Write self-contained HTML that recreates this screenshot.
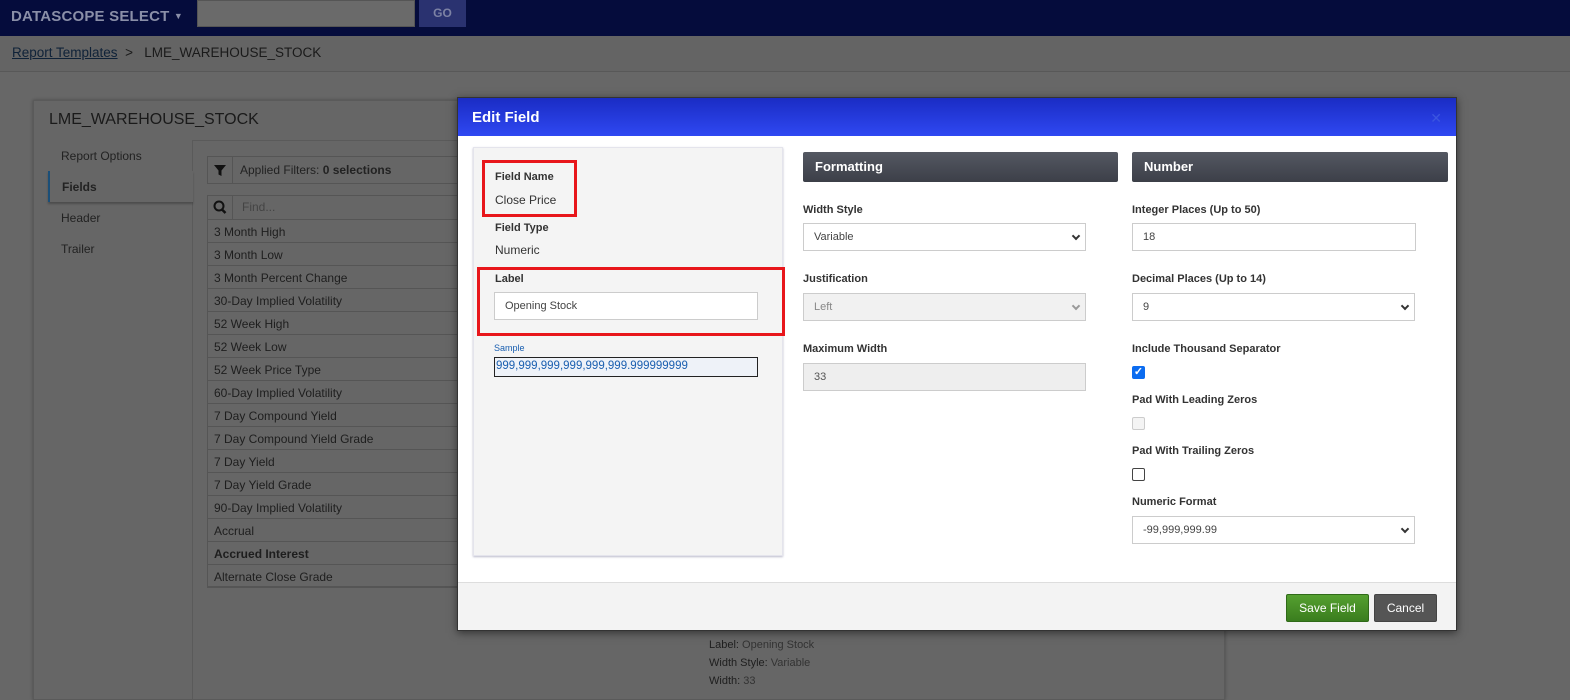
<!DOCTYPE html>
<html><head><meta charset="utf-8"><style>
*{box-sizing:border-box;margin:0;padding:0}
body{width:1570px;height:689px;overflow:hidden;background:#676767;font-family:"Liberation Sans",Arial,sans-serif;position:relative;color:#1e1e1e}
.a{position:absolute}
.top{left:0;top:0;width:1570px;height:36px;background:#050c3c}
.brand{left:11px;top:8px;color:#8a8fa8;font-size:15px;font-weight:bold;letter-spacing:0.2px}
.crumb{left:0;top:36px;width:1570px;height:36px;background:#646464;border-bottom:1px solid #585858}
.panel{left:33px;top:100px;width:1192px;height:600px;background:#666;border:1px solid #5a5a5a;box-shadow:0 0 3px rgba(0,0,0,.3)}
.row{left:207px;width:260px;height:23px;border:1px solid #555;border-top:none;font-size:12px;padding:5px 6px;color:#1e1e1e}
.modal{left:457px;top:97px;width:1000px;height:534px;background:#fff;border:1px solid #333;box-shadow:0 2px 8px rgba(0,0,0,.5)}
.hdr{left:0;top:0;width:998px;height:38px;background:linear-gradient(#1a2cc4,#2f48f2);color:#fff;font-weight:bold;font-size:15px;padding:11px 14px}
.lbl{font-size:11px;font-weight:bold;color:#333}
.inp{background:#fff;border:1px solid #ccc;font-size:11px;color:#444;padding:0 10px;line-height:26px;height:28px}
.sec{height:30px;background:linear-gradient(#545862,#3c3f48);border-radius:2px;color:#fff;font-weight:bold;font-size:13px;padding:7px 12px}
.chev{position:absolute;right:6px;top:9px;width:6px;height:6px;border-right:2px solid #333;border-bottom:2px solid #333;transform:rotate(45deg)}
</style></head><body>
<div class="a top"></div>
<div class="a brand">DATASCOPE SELECT <span style="font-size:9px;vertical-align:2px">▼</span></div>
<div class="a" style="left:197px;top:0;width:218px;height:27px;background:#6a6a6a;border:1px solid #555"></div>
<div class="a" style="left:419px;top:0;width:47px;height:27px;background:#2a3270;color:#7d82a4;font-weight:bold;font-size:12px;text-align:center;line-height:27px">GO</div>
<div class="a crumb"></div>
<div class="a" style="left:12px;top:45px;font-size:13.5px;color:#1a1a1a"><span style="text-decoration:underline;color:#0f2238">Report Templates</span> &nbsp;&gt;&nbsp;&nbsp; LME_WAREHOUSE_STOCK</div>
<div class="a panel"></div>
<div class="a" style="left:49px;top:111px;font-size:16px;color:#1a1a1a">LME_WAREHOUSE_STOCK</div>
<div class="a" style="left:192px;top:140px;width:1034px;height:560px;border-left:1px solid #5a5a5a;border-top:1px solid #5a5a5a"></div>
<div class="a" style="left:61px;top:149px;font-size:12px;color:#222">Report Options</div>
<div class="a" style="left:48px;top:171px;width:145px;height:31px;background:#666;border-left:2px solid #1b4f78;box-shadow:0 2px 2px rgba(0,0,0,.25)"></div>
<div class="a" style="left:62px;top:180px;font-size:12px;font-weight:bold;color:#222">Fields</div>
<div class="a" style="left:61px;top:211px;font-size:12px;color:#222">Header</div>
<div class="a" style="left:61px;top:242px;font-size:12px;color:#222">Trailer</div>
<div class="a" style="left:207px;top:156px;width:260px;height:28px;border:1px solid #555"></div>
<div class="a" style="left:207px;top:156px;width:26px;height:28px;border-right:1px solid #555"><svg width="26" height="28"><path d="M7 9 H19 L14.5 14.5 V20 L11.5 18.5 V14.5 Z" fill="#111"/></svg></div>
<div class="a" style="left:240px;top:163px;font-size:12px;color:#222">Applied Filters: <b>0 selections</b></div>
<div class="a" style="left:207px;top:195px;width:260px;height:25px;border:1px solid #555"></div>
<div class="a" style="left:207px;top:195px;width:26px;height:25px;border-right:1px solid #555"><svg width="26" height="25"><circle cx="12" cy="11" r="4.5" fill="none" stroke="#111" stroke-width="2"/><path d="M15 14.5 L18.5 18" stroke="#111" stroke-width="2.5"/></svg></div>
<div class="a" style="left:242px;top:200px;font-size:12px;color:#444">Find...</div>
<div class="a row" style="top:220px">3 Month High</div>
<div class="a row" style="top:243px">3 Month Low</div>
<div class="a row" style="top:266px">3 Month Percent Change</div>
<div class="a row" style="top:289px">30-Day Implied Volatility</div>
<div class="a row" style="top:312px">52 Week High</div>
<div class="a row" style="top:335px">52 Week Low</div>
<div class="a row" style="top:358px">52 Week Price Type</div>
<div class="a row" style="top:381px">60-Day Implied Volatility</div>
<div class="a row" style="top:404px">7 Day Compound Yield</div>
<div class="a row" style="top:427px">7 Day Compound Yield Grade</div>
<div class="a row" style="top:450px">7 Day Yield</div>
<div class="a row" style="top:473px">7 Day Yield Grade</div>
<div class="a row" style="top:496px">90-Day Implied Volatility</div>
<div class="a row" style="top:519px">Accrual</div>
<div class="a row" style="top:542px;font-weight:bold">Accrued Interest</div>
<div class="a row" style="top:565px;border-bottom:2px solid #555">Alternate Close Grade</div>
<div class="a" style="left:709px;top:636px;font-size:11px;color:#1e1e1e;line-height:18px">Label: <span style="color:#333">Opening Stock</span><br>Width Style: <span style="color:#333">Variable</span><br>Width: <span style="color:#333">33</span></div>

<div class="a modal">
 <div class="a hdr">Edit Field</div>
 <div class="a" style="right:14px;top:12px;color:#3b55e0;font-size:14px">✕</div>
 <div class="a" style="left:15px;top:49px;width:310px;height:409px;background:#f4f4f4;border:1px solid #e4e4ec;box-shadow:0 1px 2px #bbc"></div>
 <div class="a" style="left:24px;top:62px;width:95px;height:57px;border:3px solid #e8161b"></div>
 <div class="a lbl" style="left:37px;top:73px">Field Name</div>
 <div class="a" style="left:37px;top:95px;font-size:12px;color:#333">Close Price</div>
 <div class="a lbl" style="left:37px;top:124px">Field Type</div>
 <div class="a" style="left:37px;top:145px;font-size:12px;color:#333">Numeric</div>
 <div class="a" style="left:19px;top:169px;width:308px;height:69px;border:3px solid #e8161b"></div>
 <div class="a lbl" style="left:37px;top:175px">Label</div>
 <div class="a inp" style="left:36px;top:194px;width:264px">Opening Stock</div>
 <div class="a" style="left:36px;top:245px;font-size:9px;color:#1a5fb0">Sample</div>
 <div class="a" style="left:36px;top:259px;width:264px;height:20px;border:1px solid #222;background:#eef2f8;font-size:11.5px;color:#1a5fb0;padding:2px 0 0 1px">999,999,999,999,999,999.999999999</div>

 <div class="a sec" style="left:345px;top:54px;width:315px">Formatting</div>
 <div class="a lbl" style="left:345px;top:106px">Width Style</div>
 <div class="a inp" style="left:345px;top:125px;width:283px">Variable<span class="chev"></span></div>
 <div class="a lbl" style="left:345px;top:175px">Justification</div>
 <div class="a inp" style="left:345px;top:195px;width:283px;background:#f1f1f1;color:#888">Left<span class="chev" style="border-color:#999"></span></div>
 <div class="a lbl" style="left:345px;top:245px">Maximum Width</div>
 <div class="a inp" style="left:345px;top:265px;width:283px;background:#eee;color:#555">33</div>

 <div class="a sec" style="left:674px;top:54px;width:316px">Number</div>
 <div class="a lbl" style="left:674px;top:106px">Integer Places (Up to 50)</div>
 <div class="a inp" style="left:674px;top:125px;width:284px">18</div>
 <div class="a lbl" style="left:674px;top:175px">Decimal Places (Up to 14)</div>
 <div class="a inp" style="left:674px;top:195px;width:283px">9<span class="chev"></span></div>
 <div class="a lbl" style="left:674px;top:245px">Include Thousand Separator</div>
 <div class="a" style="left:674px;top:268px;width:13px;height:13px;background:#0b6cf0;border-radius:2px;color:#fff;font-size:11px;line-height:13px;text-align:center;font-weight:bold">✓</div>
 <div class="a lbl" style="left:674px;top:296px">Pad With Leading Zeros</div>
 <div class="a" style="left:674px;top:319px;width:13px;height:13px;background:#f4f4f4;border:1px solid #ccc;border-radius:2px"></div>
 <div class="a lbl" style="left:674px;top:347px">Pad With Trailing Zeros</div>
 <div class="a" style="left:674px;top:370px;width:13px;height:13px;border:1px solid #444;border-radius:2px"></div>
 <div class="a lbl" style="left:674px;top:398px">Numeric Format</div>
 <div class="a inp" style="left:674px;top:418px;width:283px">-99,999,999.99<span class="chev"></span></div>

 <div class="a" style="left:0;top:484px;width:998px;height:48px;background:#f3f3f3;border-top:1px solid #ddd"></div>
 <div class="a" style="left:828px;top:496px;width:83px;height:28px;background:linear-gradient(#55a030,#3a7d1e);border:1px solid #2f6a18;border-radius:2px;color:#fff;font-size:12px;text-align:center;line-height:26px">Save Field</div>
 <div class="a" style="left:916px;top:496px;width:63px;height:28px;background:#555;border:1px solid #444;border-radius:2px;color:#fff;font-size:12px;text-align:center;line-height:26px">Cancel</div>
</div>
</body></html>
